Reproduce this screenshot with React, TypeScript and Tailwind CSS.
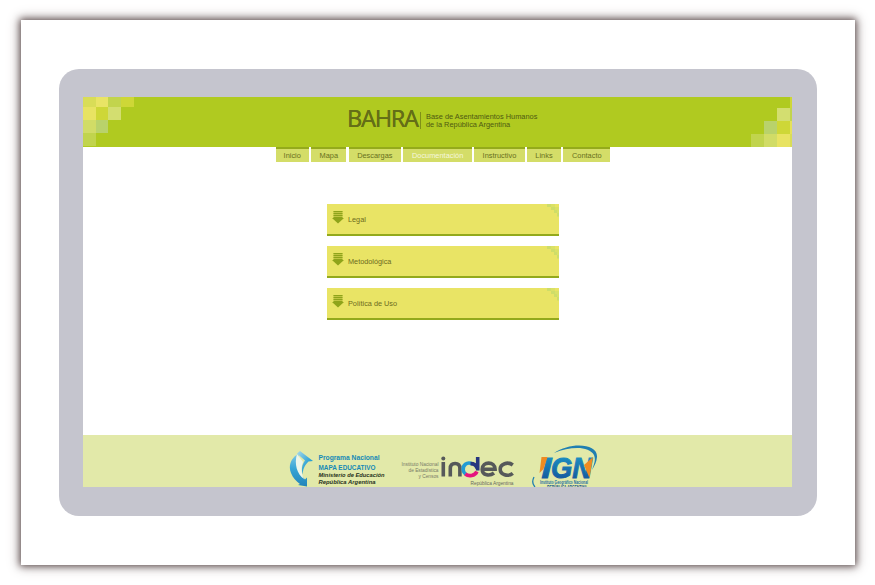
const tabs = [
  { label: "Inicio", width: "w-[33.5px]" },
  { label: "Mapa", width: "w-[35px]" },
  { label: "Descargas", width: "w-[52.5px]" },
  { label: "Documentación", width: "w-[68.5px]", active: true },
  { label: "Instructivo", width: "w-[50.5px]" },
  { label: "Links", width: "w-[34px]" },
  { label: "Contacto", width: "w-[47px]" },
];

const documents = ["Legal", "Metodológica", "Política de Uso"];

function LeftMosaic() {
  return (
    <svg width="51" height="50" viewBox="0 0 51 50" shapeRendering="crispEdges" className="shrink-0">
      <rect x="0" y="0" width="13" height="10" fill="#d9dd57" />
      <rect x="13" y="0" width="12" height="10" fill="#e9e465" />
      <rect x="25" y="0" width="13" height="10" fill="#c2d44d" />
      <rect x="38" y="0" width="13" height="10" fill="#ced737" />
      <rect x="0" y="10" width="13" height="13" fill="#e8e362" />
      <rect x="13" y="10" width="12" height="13" fill="#ced737" />
      <rect x="25" y="10" width="13" height="13" fill="#d3de70" />
      <rect x="0" y="23" width="13" height="13" fill="#d1dc66" />
      <rect x="13" y="23" width="12" height="13" fill="#b9d26b" />
      <rect x="0" y="36" width="13" height="13" fill="#c1d44d" />
    </svg>
  );
}

function RightMosaic() {
  return (
    <svg width="41" height="50" viewBox="0 0 41 50" shapeRendering="crispEdges" className="ml-auto shrink-0">
      <rect x="39" y="0" width="2" height="11" fill="#ced737" />
      <rect x="26" y="11" width="13" height="13" fill="#d3de70" />
      <rect x="39" y="11" width="2" height="13" fill="#c2d44d" />
      <rect x="13" y="24" width="13" height="13" fill="#b9d26b" />
      <rect x="26" y="24" width="13" height="13" fill="#ced737" />
      <rect x="39" y="24" width="2" height="13" fill="#e5e15a" />
      <rect x="0" y="37" width="13" height="13" fill="#c1d44d" />
      <rect x="13" y="37" width="13" height="13" fill="#d1dc66" />
      <rect x="26" y="37" width="13" height="13" fill="#e8e362" />
      <rect x="39" y="37" width="2" height="13" fill="#d9dd57" />
    </svg>
  );
}

function Header() {
  return (
    <header className="flex h-[50px] shrink-0 items-start bg-[#b0ca20]">
      <LeftMosaic />
      <div className="ml-[213px] mt-[8px] w-[73px] whitespace-nowrap font-['Noto_Sans',sans-serif] text-[23.500px] leading-[26px] tracking-[-1.300px] text-[#646e17] [text-shadow:0_0_0.500px_#646e17]">
        BAHRA
      </div>
      <div className="mt-[15px] h-[17px] w-px bg-[#7f9018]" />
      <div className="ml-[5px] mt-[15.500px] whitespace-nowrap text-[7.400px] leading-[8.500px] text-[#4f5a12]">
        <div>Base de Asentamientos Humanos</div>
        <div>de la República Argentina</div>
      </div>
      <RightMosaic />
    </header>
  );
}

function DownIcon() {
  return (
    <svg width="12" height="14" viewBox="0 0 12 14" className="shrink-0">
      <rect x="1.500" y="1" width="9" height="7" fill="#c0c542" />
      <path d="M1.500 1.500h9M1.500 3.500h9M1.500 5.500h9M1.500 7.500h9" stroke="#8fa41a" strokeWidth="1" />
      <path d="M0 8h12l-6 5.500z" fill="#8fa41a" />
    </svg>
  );
}

function DocumentCard({ title }: { title: string }) {
  return (
    <div className="flex h-[32px] items-start border-b-2 border-[#93a91c] bg-[#e9e465] pl-[5px]">
      <div className="mt-[6px]">
        <DownIcon />
      </div>
      <span className="ml-[4.500px] mt-[10.500px] text-[7.300px] leading-[9px] text-[#6d6c1d]">{title}</span>
      <svg width="13" height="13" viewBox="0 0 13 13" className="ml-auto">
        <path d="M1 0h8v3h4v10h-2V9H8V6H5V3H1z" fill="#dae165" />
        <path d="M1 0h4v3H1zM5 3h4v3H5zM8 6h3v3H8zM11 9h2v3h-2z" fill="#cedd68" />
      </svg>
    </div>
  );
}

function MapaLogo() {
  return (
    <svg width="98" height="37" viewBox="0 0 98 37" className="shrink-0" fontFamily="'Liberation Sans', sans-serif">
      <defs>
        <linearGradient id="ribbon" x1="0" y1="0" x2="0" y2="1">
          <stop offset="0" stopColor="#7ec8e6" />
          <stop offset=".45" stopColor="#37a5d5" />
          <stop offset="1" stopColor="#2384b9" />
        </linearGradient>
        <linearGradient id="flap" x1="0" y1="0" x2="1" y2="1">
          <stop offset="0" stopColor="#a6d9ec" />
          <stop offset=".7" stopColor="#1f9bd1" />
        </linearGradient>
      </defs>
      <path d="M9 4C2 8-1 16 2 23c2 5 5 8 9 11l-2 1 9 1.500 0-9-2 2c-4-4-6-9-4-16z" fill="url(#ribbon)" />
      <path d="M8 4l6 8c-2 5-2 11 1 17C8 24 5 14 8 4z" fill="#edf6ea" />
      <path d="M11 1l13 10-4.500.500c-4 4-6 8-5.500 13-2-5-1-10 2-14L8 3.500z" fill="url(#flap)" />
      <text x="29.500" y="10.400" fontSize="8" fontWeight="bold" fill="#1689b6" textLength="61" lengthAdjust="spacingAndGlyphs">Programa Nacional</text>
      <text x="29.500" y="19.700" fontSize="8" fontWeight="bold" fill="#1689b6" textLength="57" lengthAdjust="spacingAndGlyphs">MAPA EDUCATIVO</text>
      <text x="29.500" y="27.300" fontSize="6" fontWeight="bold" fontStyle="italic" fill="#27321d" textLength="66" lengthAdjust="spacingAndGlyphs">Ministerio de Educación</text>
      <text x="29.500" y="33.800" fontSize="6" fontWeight="bold" fontStyle="italic" fill="#27321d" textLength="57" lengthAdjust="spacingAndGlyphs">República Argentina</text>
    </svg>
  );
}

function IndecLogo() {
  return (
    <svg width="115" height="32" viewBox="0 0 115 32" className="shrink-0" fontFamily="'Liberation Sans', sans-serif">
      <g fontSize="5.300" fill="#777a68" textAnchor="end">
        <text x="38.500" y="9.700" textLength="37" lengthAdjust="spacingAndGlyphs">Instituto Nacional</text>
        <text x="38.500" y="15.700" textLength="30" lengthAdjust="spacingAndGlyphs">de Estadística</text>
        <text x="38.500" y="21.500" textLength="20" lengthAdjust="spacingAndGlyphs">y Censos</text>
        <text x="113.500" y="28.700" textLength="43" lengthAdjust="spacingAndGlyphs" fill="#66685d">República Argentina</text>
      </g>
      <g fill="none" strokeWidth="3.600">
        <g stroke="#56595a">
          <path d="M43.300 6v14.500M50.300 20.500V12.500q0-5 4.800-5t4.800 5v8" />
          <path d="M82.500 13.300h12.600c0-8.300-12.900-8.300-12.900 0 0 6.700 8 6.700 11.800 3.700" />
          <path d="M112.800 9c-5-3.800-12.600-1-12.600 4.300s7.600 8 12.600 4" />
        </g>
        <path d="M72 7.600c-5.500-1.800-9.200 1.400-8.800 6.200.2 2 1 3.200 2.400 4.200" stroke="#219bd4" />
        <path d="M65.300 18c3.300 2.700 9.800 2 11.600-2.500" stroke="#e5147f" />
        <path d="M77.700 1v13.500M70.500 7.600c3 0 5.800 1.800 6.500 4.600" stroke="#26357f" />
      </g>
      <circle cx="43.300" cy="2.600" r="2" fill="#56595a" />
    </svg>
  );
}

function IgnLogo() {
  return (
    <svg width="66" height="42" viewBox="0 0 66 42" className="shrink-0" fontFamily="'Liberation Sans', sans-serif">
      <defs>
        <linearGradient id="ignBlue" gradientUnits="userSpaceOnUse" x1="0" y1="11" x2="0" y2="34">
          <stop offset="0" stopColor="#1c90c2" />
          <stop offset="1" stopColor="#155a9f" />
        </linearGradient>
      </defs>
      <path d="M22 8C38-3 66-2 65 12c-.5 5-2 8-5 13 2-6 4-10 2-15C57 1 39 1 22 8z" fill="#207fb1" />
      <path d="M2 32q-3 6 1 10" fill="none" stroke="#207fb1" strokeWidth="1.300" />
      <g fontSize="30" fontWeight="bold" fontStyle="italic" fill="url(#ignBlue)" stroke="url(#ignBlue)" strokeWidth="1">
        <text x="9.500" y="32.500" textLength="10" lengthAdjust="spacingAndGlyphs">I</text>
        <text x="19" y="32.500" textLength="41" lengthAdjust="spacingAndGlyphs">GN</text>
      </g>
      <path d="M9.500 12h6l-4 12-4 4z" fill="#ef8b22" />
      <path d="M57.500 33L52 20l9-8z" fill="#ef8b22" />
      <text x="8" y="39.300" fontSize="5" fontWeight="bold" fill="#1b70a4" textLength="48" lengthAdjust="spacingAndGlyphs">Instituto Geográfico Nacional</text>
      <text x="15" y="44.300" fontSize="4.800" fontWeight="bold" fill="#1b5892" textLength="40" lengthAdjust="spacingAndGlyphs">REPÚBLICA ARGENTINA</text>
    </svg>
  );
}

export default function App() {
  return (
    <div className="h-[585px] w-[875px] overflow-hidden bg-white pl-[21px] pt-[20px] font-['Liberation_Sans',Arial,sans-serif]">
      <div className="h-[544.500px] w-[834px] bg-white pl-[37.500px] pt-[49px] shadow-[0_0_7px_1px_#5e4f4f,0_0_12px_2px_#c5bdbd]">
        <div className="h-[446.500px] w-[758.500px] rounded-[20px] bg-[#c5c5ce] pl-[24.500px] pt-[28px]">
          <main className="flex h-[390px] w-[709px] flex-col overflow-hidden bg-white">
            <Header />
            <nav className="ml-[192.500px] flex h-[15px] gap-[2.300px]">
              {tabs.map((tab) => (
                <a
                  key={tab.label}
                  className={`${tab.width} ${tab.active ? "text-[#f5f7dd]" : "text-[#68701d]"} shrink-0 whitespace-nowrap border-t-2 border-[#94aa1b] bg-[#d4dd68] text-center text-[7.400px] leading-[13px]`}
                >
                  {tab.label}
                </a>
              ))}
            </nav>
            <section className="ml-[243.500px] mt-[42px] flex w-[232px] flex-col gap-[10.200px]">
              {documents.map((title) => (
                <DocumentCard key={title} title={title} />
              ))}
            </section>
            <footer className="mt-auto flex h-[52px] items-start overflow-hidden bg-[#e2e9a9] pl-[206px]">
              <div className="mt-[15px]">
                <MapaLogo />
              </div>
              <div className="ml-[13px] mt-[21px]">
                <IndecLogo />
              </div>
              <div className="ml-[17px] mt-[10px]">
                <IgnLogo />
              </div>
            </footer>
          </main>
        </div>
      </div>
    </div>
  );
}
